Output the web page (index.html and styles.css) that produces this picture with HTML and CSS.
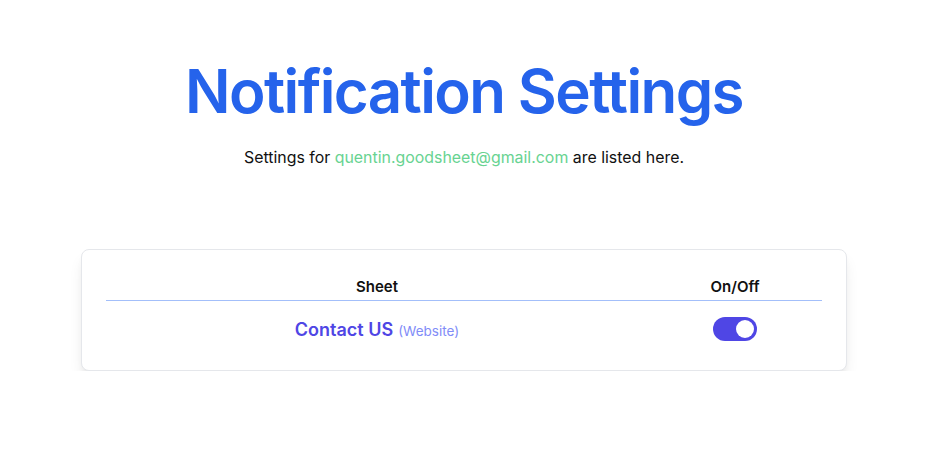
FILE: index.html
```html
<!DOCTYPE html>
<html lang="en">
<head>
<meta charset="UTF-8">
<meta name="viewport" content="width=device-width, initial-scale=1.0">
<title>Notification Settings</title>
<link rel="stylesheet" href="styles.css">
</head>
<body>

<div class="page">
  <h1 class="title">Notification Settings</h1>
  <p class="subtitle">Settings for <span class="email">quentin.goodsheet@gmail.com</span> are listed here.</p>

  <div class="card">
    <div class="sheets">
      <div class="head col-sheet">Sheet</div>
      <div class="head col-toggle">On/Off</div>

      <div class="cell col-sheet">
        <span class="sheet-name">Contact US</span>
        <span class="sheet-type">(Website)</span>
      </div>
      <div class="cell col-toggle">
        <label class="switch">
          <input type="checkbox" checked>
          <span class="slider"></span>
        </label>
      </div>
    </div>
  </div>
</div>

</body>
</html>
```

FILE: styles.css
```css
body, html {
  margin: 0;
  padding: 0;
  background: #fff;
  font-family: Inter, "Noto Sans", sans-serif;
  color: #111;
}

.page {
  display: flex;
  flex-direction: column;
  align-items: center;
  padding: 56px 12px 0 0;
}

.title {
  margin: 0;
  font-size: 60px;
  font-weight: 600;
  line-height: 70px;
  color: #2563eb;
  letter-spacing: -1.6px;
}

.subtitle {
  margin: 20px 0 0;
  font-size: 15.9px;
  line-height: 24px;
  color: #111;
}

.email {
  color: #68d391;
}

.card {
  margin-top: 79px;
  width: 716px;
  padding: 18px 24px 29px;
  border: 1px solid #e5e7eb;
  border-radius: 8px;
  box-shadow: 0 10px 15px -3px rgba(0, 0, 0, 0.1), 0 4px 6px -2px rgba(0, 0, 0, 0.05);
  background: #fff;
}

.sheets {
  display: grid;
  grid-template-columns: 542px 1fr;
}

.head {
  text-align: center;
  font-size: 15px;
  font-weight: 600;
  line-height: 20px;
  padding: 9px 0 3px;
  border-bottom: 1px solid #a3bffa;
}

.cell {
  display: flex;
  justify-content: center;
  align-items: center;
  gap: 5px;
  padding-top: 16px;
  height: 24px;
}

.sheet-name {
  font-size: 18px;
  font-weight: 600;
  color: #4f46e5;
}

.sheet-type {
  font-size: 13.5px;
  color: #818cf8;
  margin-top: 3px;
}

.switch {
  display: block;
  position: relative;
  width: 44px;
  height: 24px;
}

.switch input {
  display: none;
}

.slider {
  position: absolute;
  inset: 0;
  border-radius: 12px;
  background: #4f46e5;
  cursor: pointer;
}

.slider::after {
  content: "";
  position: absolute;
  top: 3px;
  right: 3px;
  width: 18px;
  height: 18px;
  border-radius: 50%;
  background: #fff;
}
```
